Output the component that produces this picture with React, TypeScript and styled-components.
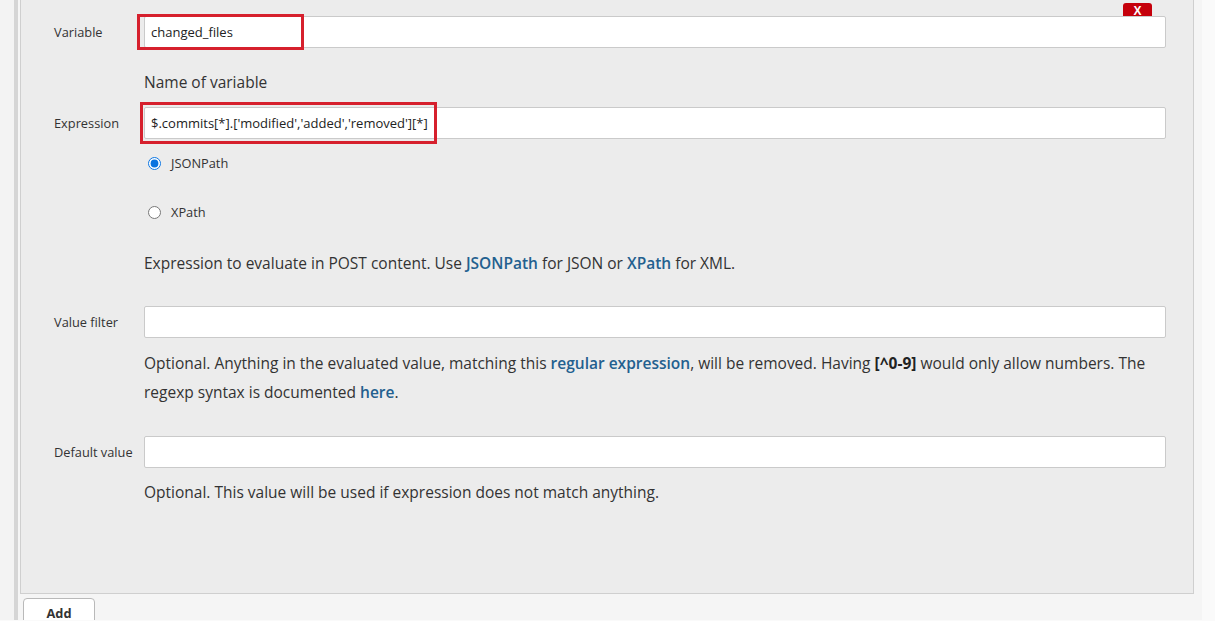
import React, { FC, ReactNode } from 'react'
import styled, { createGlobalStyle } from 'styled-components'

const GlobalStyle = createGlobalStyle`
    html, body { margin: 0; padding: 0; }
    body {
        background: #fafafa;
        font-family: "Open Sans", "Noto Sans", "Liberation Sans", sans-serif;
        color: #333;
        overflow: hidden;
    }
`

const Page = styled.div`
    width: 1215px;
    height: 621px;
    padding-left: 14px;
    box-sizing: border-box;
    background: linear-gradient( to right, #f3f3f3 0, #f3f3f3 14px, transparent 14px );
`

const Chunk = styled.div`
    width: 1188px;
    height: 100%;
    border-left: 4px solid #d5d5d5;
    background: #f5f5f5;
    box-sizing: border-box;
    padding-left: 2px;
`

const Panel = styled.div`
    position: relative;
    margin-top: -1px;
    width: 1174px;
    height: 595px;
    box-sizing: border-box;
    background: #ececec;
    border: 1px solid #cfcfcf;
    padding: 16px 27px 0 33px;
`

const DeleteButton = styled.button`
    position: absolute;
    top: 3px;
    right: 41px;
    width: 29px;
    height: 17px;
    padding: 0;
    border: none;
    border-radius: 3px;
    background: #c5000b;
    color: #fff;
    font: bold 12px "Liberation Sans", sans-serif;
    line-height: 17px;
    cursor: pointer;
`

const Row = styled.div< { gap: number } >`
    display: grid;
    grid-template-columns: 90px 1fr;
    align-items: center;
    margin-top: ${ p => p.gap }px;
`

const Label = styled.label`
    font-size: 12.8px;
    color: #333;
`

const Field = styled.div`
    position: relative;
`

const TextInput = styled.input`
    display: block;
    width: 100%;
    height: 32px;
    box-sizing: border-box;
    border: 1px solid #cacaca;
    border-radius: 2px;
    background: #fff;
    padding: 0 6px;
    font: 13px "Open Sans", "Noto Sans", sans-serif;
    color: #222;
    outline: none;
`

const Highlight = styled.div< { left: number, top: number, w: number, h: number } >`
    position: absolute;
    left: ${ p => p.left }px;
    top: ${ p => p.top }px;
    width: ${ p => p.w }px;
    height: ${ p => p.h }px;
    box-sizing: border-box;
    border: 3px solid #d6202d;
    pointer-events: none;
`

const Help = styled.div< { gap: number } >`
    margin: ${ p => p.gap }px 0 0 90px;
    font-size: 15.5px;
    line-height: 29px;
    color: #333;
    > a {
        color: #23608f;
        font-weight: 600;
        text-decoration: none;
    }
    > b { color: #222; }
`

const RadioRow = styled.label< { gap: number } >`
    display: flex;
    align-items: center;
    gap: 10px;
    margin: ${ p => p.gap }px 0 0 94px;
    height: 20px;
    font-size: 12.8px;
    color: #333;
    > input {
        margin: 0;
        width: 13px;
        height: 13px;
        accent-color: #0a74e0;
    }
`

const AddButton = styled.button`
    margin: 4px 0 0 3px;
    width: 72px;
    height: 30px;
    box-sizing: border-box;
    background: #fff;
    border: 1px solid #b9b9b9;
    border-radius: 4px;
    padding: 0;
    font: bold 12.8px "Open Sans", "Noto Sans", sans-serif;
    color: #333;
`

interface FieldRowProps {
    label: string
    value?: string
    gap: number
    mark?: { left: number, top: number, w: number, h: number }
}

const FieldRow: FC< FieldRowProps > = ({ label, value, gap, mark }) => <Row gap={ gap }>
    <Label>{ label }</Label>
    <Field>
        <TextInput defaultValue={ value ?? '' } />
        { mark && <Highlight { ...mark } /> }
    </Field>
</Row>

const Radio: FC< { gap: number, checked?: boolean, children: ReactNode } > = ({ gap, checked, children }) =>
    <RadioRow gap={ gap }>
        <input type="radio" name="exprType" defaultChecked={ checked } />
        <span>{ children }</span>
    </RadioRow>

export default function App() {
    return <>
        <GlobalStyle />
        <Page>
            <Chunk>
                <Panel>
                    <DeleteButton>X</DeleteButton>
                    <FieldRow label="Variable" value="changed_files" gap={ 0 }
                        mark={ { left: -7, top: -2, w: 167, h: 36 } } />
                    <Help gap={ 20 }>Name of variable</Help>
                    <FieldRow label="Expression" value="$.commits[*].['modified','added','removed'][*]" gap={ 10 }
                        mark={ { left: -4, top: -5, w: 297, h: 42 } } />
                    <Radio gap={ 14 } checked>JSONPath</Radio>
                    <Radio gap={ 29 }>XPath</Radio>
                    <Help gap={ 27 }>
                        Expression to evaluate in POST content. Use <a href="#">JSONPath</a> for JSON or <a href="#">XPath</a> for XML.
                    </Help>
                    <FieldRow label="Value filter" gap={ 28 } />
                    <Help gap={ 11 }>
                        Optional. Anything in the evaluated value, matching this <a href="#">regular expression</a>, will be removed. Having <b>[^0-9]</b> would only allow numbers. The regexp syntax is documented <a href="#">here</a>.
                    </Help>
                    <FieldRow label="Default value" gap={ 29 } />
                    <Help gap={ 10 }>Optional. This value will be used if expression does not match anything.</Help>
                </Panel>
                <AddButton>Add</AddButton>
            </Chunk>
        </Page>
    </>
}
